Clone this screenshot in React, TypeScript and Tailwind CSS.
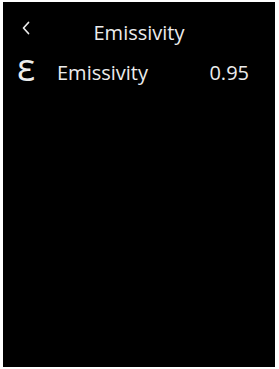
import React from "react";

export default function App() {
  return (
    <div className="w-[279px] h-[369px] bg-white pl-[3px] pr-[4px] pt-[2px] pb-[2px]" style={{ fontFamily: '"Open Sans", sans-serif' }}>
      <div className="w-full h-full bg-black text-[#ececec] flex flex-col">
        <div className="relative h-[41px] flex items-end justify-center">
          <svg className="absolute left-[18px] top-[19px]" width="10" height="14" viewBox="0 0 10 14">
            <path d="M7.5 1.5 L2.5 7 L7.5 12.5" fill="none" stroke="#ececec" strokeWidth="1.7" strokeLinecap="round" strokeLinejoin="round" />
          </svg>
          <span className="text-[20px] leading-none">Emissivity</span>
        </div>
        <div className="flex items-end h-[42px] pl-[14px] pr-[26px]">
          <span className="text-[38px] leading-none w-[40px] font-medium">ε</span>
          <span className="text-[20px] leading-none flex-1 pb-[2px]">Emissivity</span>
          <span className="text-[20px] leading-none pb-[2px]">0.95</span>
        </div>
      </div>
    </div>
  );
}
